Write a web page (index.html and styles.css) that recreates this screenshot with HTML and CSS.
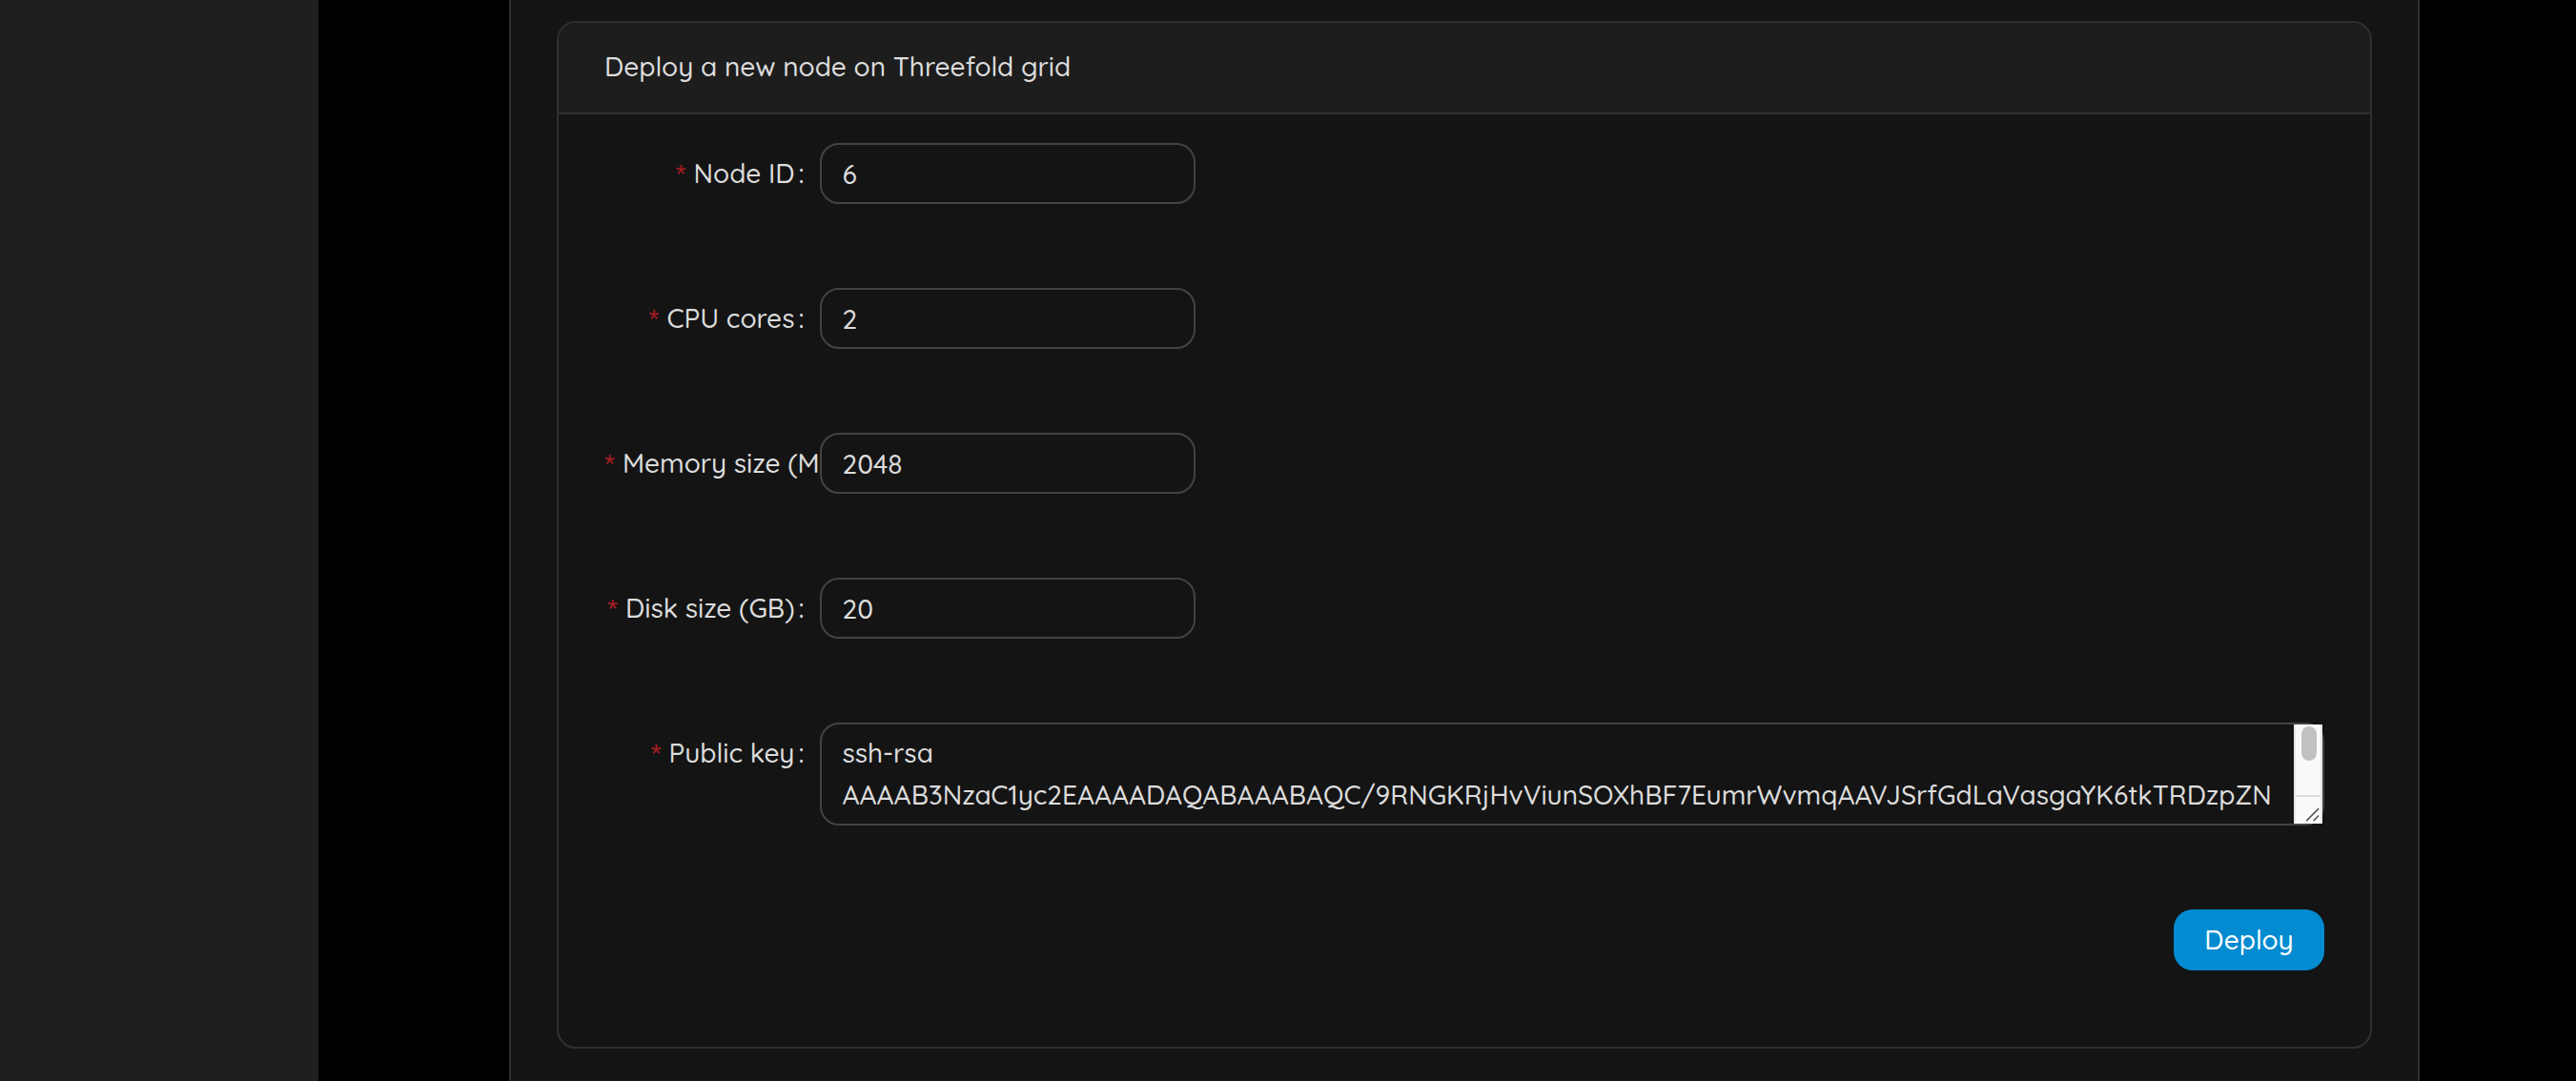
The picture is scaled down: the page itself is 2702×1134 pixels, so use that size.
FILE: index.html
```html
<!DOCTYPE html>
<html lang="en">
<head>
<meta charset="utf-8">
<meta name="viewport" content="width=device-width, initial-scale=1">
<title>Deploy a new node</title>
<link rel="stylesheet" href="styles.css">
</head>
<body>
<div class="layout">
  <aside class="sidebar"></aside>
  <main class="content">
    <div class="panel">
      <section class="card">
        <h1 class="card-head">Deploy a new node on Threefold grid</h1>
        <form class="form">
          <div class="row">
            <label class="label" for="node-id">Node ID</label>
            <input class="field field-short" id="node-id" type="text" value="6" required>
          </div>
          <div class="row">
            <label class="label" for="cpu">CPU cores</label>
            <input class="field field-short" id="cpu" type="text" value="2" required>
          </div>
          <div class="row">
            <label class="label" for="memory">Memory size (MB)</label>
            <input class="field field-short" id="memory" type="text" value="2048" required>
          </div>
          <div class="row">
            <label class="label" for="disk">Disk size (GB)</label>
            <input class="field field-short" id="disk" type="text" value="20" required>
          </div>
          <div class="row">
            <label class="label" for="key">Public key</label>
            <div class="key-box">
              <textarea class="field field-key" id="key" rows="2" spellcheck="false" required>ssh-rsa
AAAAB3NzaC1yc2EAAAADAQABAAABAQC/9RNGKRjHvViunSOXhBF7EumrWvmqAAVJSrfGdLaVasgaYK6tkTRDzpZN</textarea>
              <div class="scrollbar" aria-hidden="true">
                <span class="thumb"></span>
                <svg class="grip" viewBox="0 0 28 28"><path d="M12 26 26 12M20 26l6-6" fill="none" stroke="#555" stroke-width="1.6"/></svg>
              </div>
            </div>
          </div>
          <div class="actions">
            <button class="deploy" type="button">Deploy</button>
          </div>
        </form>
      </section>
    </div>
  </main>
</div>
</body>
</html>
```
FILE: styles.css
```css
* { box-sizing: border-box; }

body {
  margin: 0;
  background: #000;
  color: #dcdcdc;
  font: 500 28px/44px Quicksand, Lato, sans-serif;
}

.layout {
  display: flex;
  min-height: 100vh;
}

.sidebar {
  flex: 0 0 334px;
  background: #1f1f1f;
}

.content {
  display: flex;
  flex: 1;
  min-width: 0;
  padding: 0 164px 0 200px;
}

.panel {
  flex: 1;
  min-width: 0;
  padding: 22px 48px 34px;
  background: #141414;
  border: solid #303030;
  border-width: 0 2px;
}

.card {
  overflow: hidden;
  border: 2px solid #303030;
  border-radius: 20px;
}

.card-head {
  margin: 0;
  padding: 24px 48px 26px;
  background: #1d1d1d;
  border-bottom: 2px solid #303030;
  font-size: 28px;
  font-weight: 500;
}

.form {
  display: flex;
  flex-direction: column;
  gap: 88px;
  padding: 30px 48px 80px;
}

.row {
  display: grid;
  grid-template-columns: 1fr 7fr;
  align-items: start;
}

.label {
  min-width: 0;
  height: 64px;
  overflow: hidden;
  line-height: 64px;
  text-align: right;
  white-space: nowrap;
}

.label::before {
  content: "*";
  margin-right: 8px;
  color: #a61d24;
  font-family: "Liberation Sans", sans-serif;
  font-weight: 400;
  line-height: 1;
}

.label::after {
  content: ":";
  margin: 0 16px 0 4px;
}

.field {
  display: block;
  padding: 8px 22px;
  background: transparent;
  border: 2px solid #434343;
  border-radius: 20px;
  color: inherit;
  font: inherit;
  outline: 0;
}

.field-short {
  width: 25%;
  height: 64px;
}

.key-box {
  position: relative;
}

.field-key {
  width: 100%;
  height: 108px;
  overflow: hidden;
  padding-right: 48px;
  resize: none;
}

.scrollbar {
  position: absolute;
  top: 2px;
  right: 2px;
  bottom: 2px;
  display: flex;
  flex-direction: column;
  justify-content: space-between;
  width: 30px;
  background: #fafafa;
  border: solid #e8e8e8;
  border-width: 0 2px;
}

.thumb {
  width: 16px;
  height: 36px;
  margin: 2px 0 0 6px;
  background: #c1c1c1;
  border-radius: 8px;
}

.grip {
  display: block;
  width: 100%;
  height: 30px;
  border-top: 2px solid #d9d9d9;
}

.actions {
  display: flex;
  justify-content: flex-end;
}

.deploy {
  height: 64px;
  min-width: 158px;
  padding: 0 32px;
  background: #028bd0;
  border: 0;
  border-radius: 20px;
  box-shadow: 0 4px 0 rgba(0, 0, 0, 0.05);
  color: #fff;
  font: inherit;
}
```
